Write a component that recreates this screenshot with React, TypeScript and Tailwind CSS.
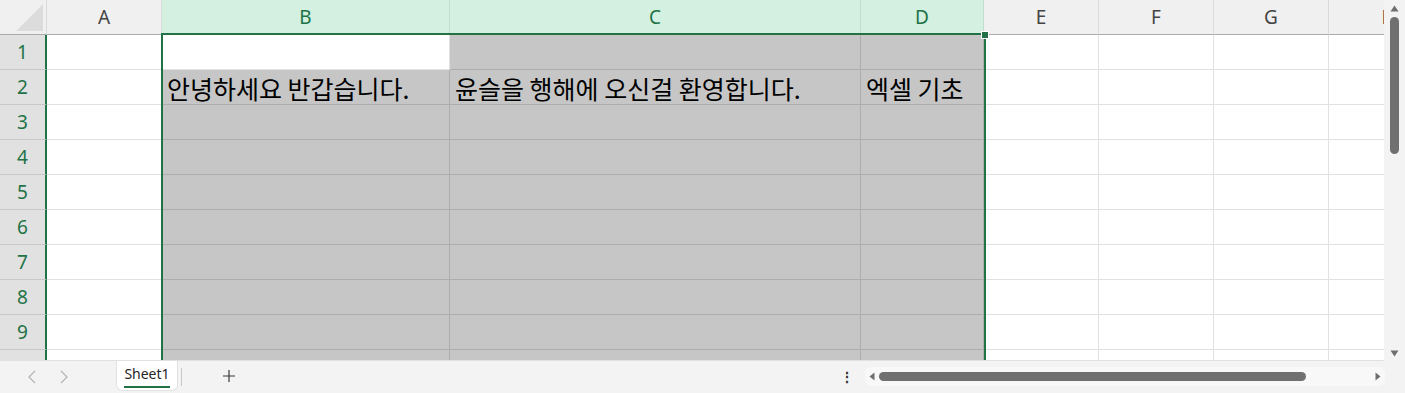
import React from "react";

type Col = { label: string; width: number; selected: boolean };

const COLS: Col[] = [
  { label: "A", width: 115, selected: false },
  { label: "B", width: 288, selected: true },
  { label: "C", width: 411, selected: true },
  { label: "D", width: 123, selected: true },
  { label: "E", width: 115, selected: false },
  { label: "F", width: 115, selected: false },
  { label: "G", width: 115, selected: false },
  { label: "H", width: 120, selected: false },
];

const ROWS = [1, 2, 3, 4, 5, 6, 7, 8, 9, 10];

// 셀 내용 (행 2)
const DATA: Record<string, string> = {
  B2: "안녕하세요 반갑습니다.",
  C2: "윤슬을 행해에 오신걸 환영합니다.",
  D2: "엑셀 기초",
};

const uiFont = { fontFamily: '"Noto Sans", "Open Sans", sans-serif' };
const cellFont = { fontFamily: '"Noto Sans CJK KR", "Noto Sans", sans-serif' };

function ColumnHeader({ col }: { col: Col }) {
  return (
    <div
      className={
        col.selected
          ? "shrink-0 h-[35px] flex items-center justify-center bg-[#d3f0e0] text-[#217346] border-r border-[#c3dccb] text-[19px]"
          : "shrink-0 h-[35px] flex items-center justify-center bg-[#f0f0f0] text-[#444444] border-r border-b border-r-[#dadada] border-b-[#ababab] text-[19px]"
      }
      style={{ width: col.width }}
    >
      {col.label}
    </div>
  );
}

function Cell({ col, row }: { col: Col; row: number }) {
  const key = `${col.label}${row}`;
  const active = key === "B1";
  const shaded = col.selected && !active;
  const text = DATA[key];
  return (
    <div
      className={
        shaded
          ? "shrink-0 h-[35px] bg-[#c6c6c6] border-r border-b border-[#adadad] flex items-end pl-[5px] pb-[1px] whitespace-nowrap overflow-hidden text-black text-[25px] leading-[30px]"
          : "shrink-0 h-[35px] bg-white border-r border-b border-[#e1e1e1] flex items-end pl-[5px] pb-[1px] whitespace-nowrap overflow-hidden text-black text-[25px] leading-[30px]"
      }
      style={{ width: col.width, ...cellFont }}
    >
      {text}
    </div>
  );
}

function Chevron({ dir }: { dir: "left" | "right" }) {
  return (
    <svg width="8" height="14" viewBox="0 0 8 14" fill="none" stroke="#b4b4b4" strokeWidth="1.2">
      {dir === "left" ? <path d="M7 1 L1 7 L7 13" /> : <path d="M1 1 L7 7 L1 13" />}
    </svg>
  );
}

export default function App() {
  return (
    <div className="w-[1405px] h-[393px] flex flex-col bg-[#f3f3f3] overflow-hidden" style={uiFont}>
      <div className="flex h-[361px] shrink-0">
        {/* Sheet grid */}
        <div className="relative shrink-0 w-[1384px] h-[361px] overflow-hidden bg-white border-b border-[#e1e1e1]">
          <div className="flex h-[35px]">
            <div className="shrink-0 w-[47px] h-[35px] bg-[#f0f0f0] border-r border-b border-r-[#dadada] border-b-[#ababab] relative">
              <svg className="absolute right-[3px] bottom-[3px]" width="27" height="27" viewBox="0 0 27 27">
                <path d="M27 0 L27 27 L0 27 Z" fill="#dcdcdc" />
              </svg>
            </div>
            {COLS.map((c) => (
              <ColumnHeader key={c.label} col={c} />
            ))}
          </div>
          {ROWS.map((r) => (
            <div key={r} className="flex h-[35px]">
              <div className="shrink-0 w-[47px] h-[35px] bg-[#e1e1e1] border-r-2 border-r-[#217346] border-b border-b-[#c8c8c8] flex items-center justify-center text-[#217346] text-[19px]">
                {r}
              </div>
              {COLS.map((c) => (
                <Cell key={c.label} col={c} row={r} />
              ))}
            </div>
          ))}
          {/* selection outline B:D */}
          <div className="absolute left-[161px] top-[33px] w-[825px] h-[400px] border-2 border-b-0 border-[#217346] pointer-events-none" />
          <div className="absolute left-[981px] top-[31px] w-[8px] h-[8px] bg-[#217346] border border-white" />
        </div>

        {/* Vertical scrollbar */}
        <div className="shrink-0 w-[21px] h-[361px] bg-[#f3f3f3] flex flex-col items-center pt-[5px] pb-[4px]">
          <svg width="9" height="7" viewBox="0 0 9 7">
            <path d="M4.5 0.5 L8.5 6.5 L0.5 6.5 Z" fill="#6e6e6e" />
          </svg>
          <div className="mt-[5px] w-[9px] h-[137px] rounded-full bg-[#707070]" />
          <div className="flex-1" />
          <svg width="9" height="7" viewBox="0 0 9 7">
            <path d="M0.5 0.5 L8.5 0.5 L4.5 6.5 Z" fill="#6e6e6e" />
          </svg>
        </div>
      </div>

      {/* Bottom bar: sheet tabs + horizontal scroll */}
      <div className="flex h-[32px] items-start">
        <div className="w-[116px] h-[32px] flex items-center pl-[28px] gap-[24px]">
          <Chevron dir="left" />
          <Chevron dir="right" />
        </div>
        <div className="w-[62px] h-[30px] bg-white rounded-b-[6px] border border-t-0 border-[#e2e2e2] flex flex-col items-center justify-center">
          <span className="text-[14px] leading-[18px] text-[#262626] mt-[1px]">Sheet1</span>
          <div className="w-[46px] h-[2px] bg-[#217346] mt-[3px]" />
        </div>
        <div className="w-[1px] h-[18px] bg-[#c8c8c8] mt-[7px] ml-[3px]" />
        <div className="w-[94px] h-[30px] flex items-center justify-center">
          <svg width="12" height="12" viewBox="0 0 12 12" stroke="#3a3a3a" strokeWidth="1.2">
            <path d="M6 0 L6 12 M0 6 L12 6" />
          </svg>
        </div>
        <div className="flex-1" />
        <div className="w-[20px] h-[30px] mr-[8px] flex items-center justify-center text-[#333] text-[14px] font-bold">⋮</div>
        <div className="w-[520px] h-[19px] mt-[6px] mr-[20px] rounded-[6px] bg-[#f8f8f8] flex items-center pl-[4px] pr-[4px]">
          <svg width="6" height="9" viewBox="0 0 6 9">
            <path d="M5.5 0.5 L5.5 8.5 L0.5 4.5 Z" fill="#6e6e6e" />
          </svg>
          <div className="ml-[4px] w-[427px] h-[9px] rounded-full bg-[#707070]" />
          <div className="flex-1" />
          <svg width="6" height="9" viewBox="0 0 6 9">
            <path d="M0.5 0.5 L0.5 8.5 L5.5 4.5 Z" fill="#6e6e6e" />
          </svg>
        </div>
      </div>
    </div>
  );
}
